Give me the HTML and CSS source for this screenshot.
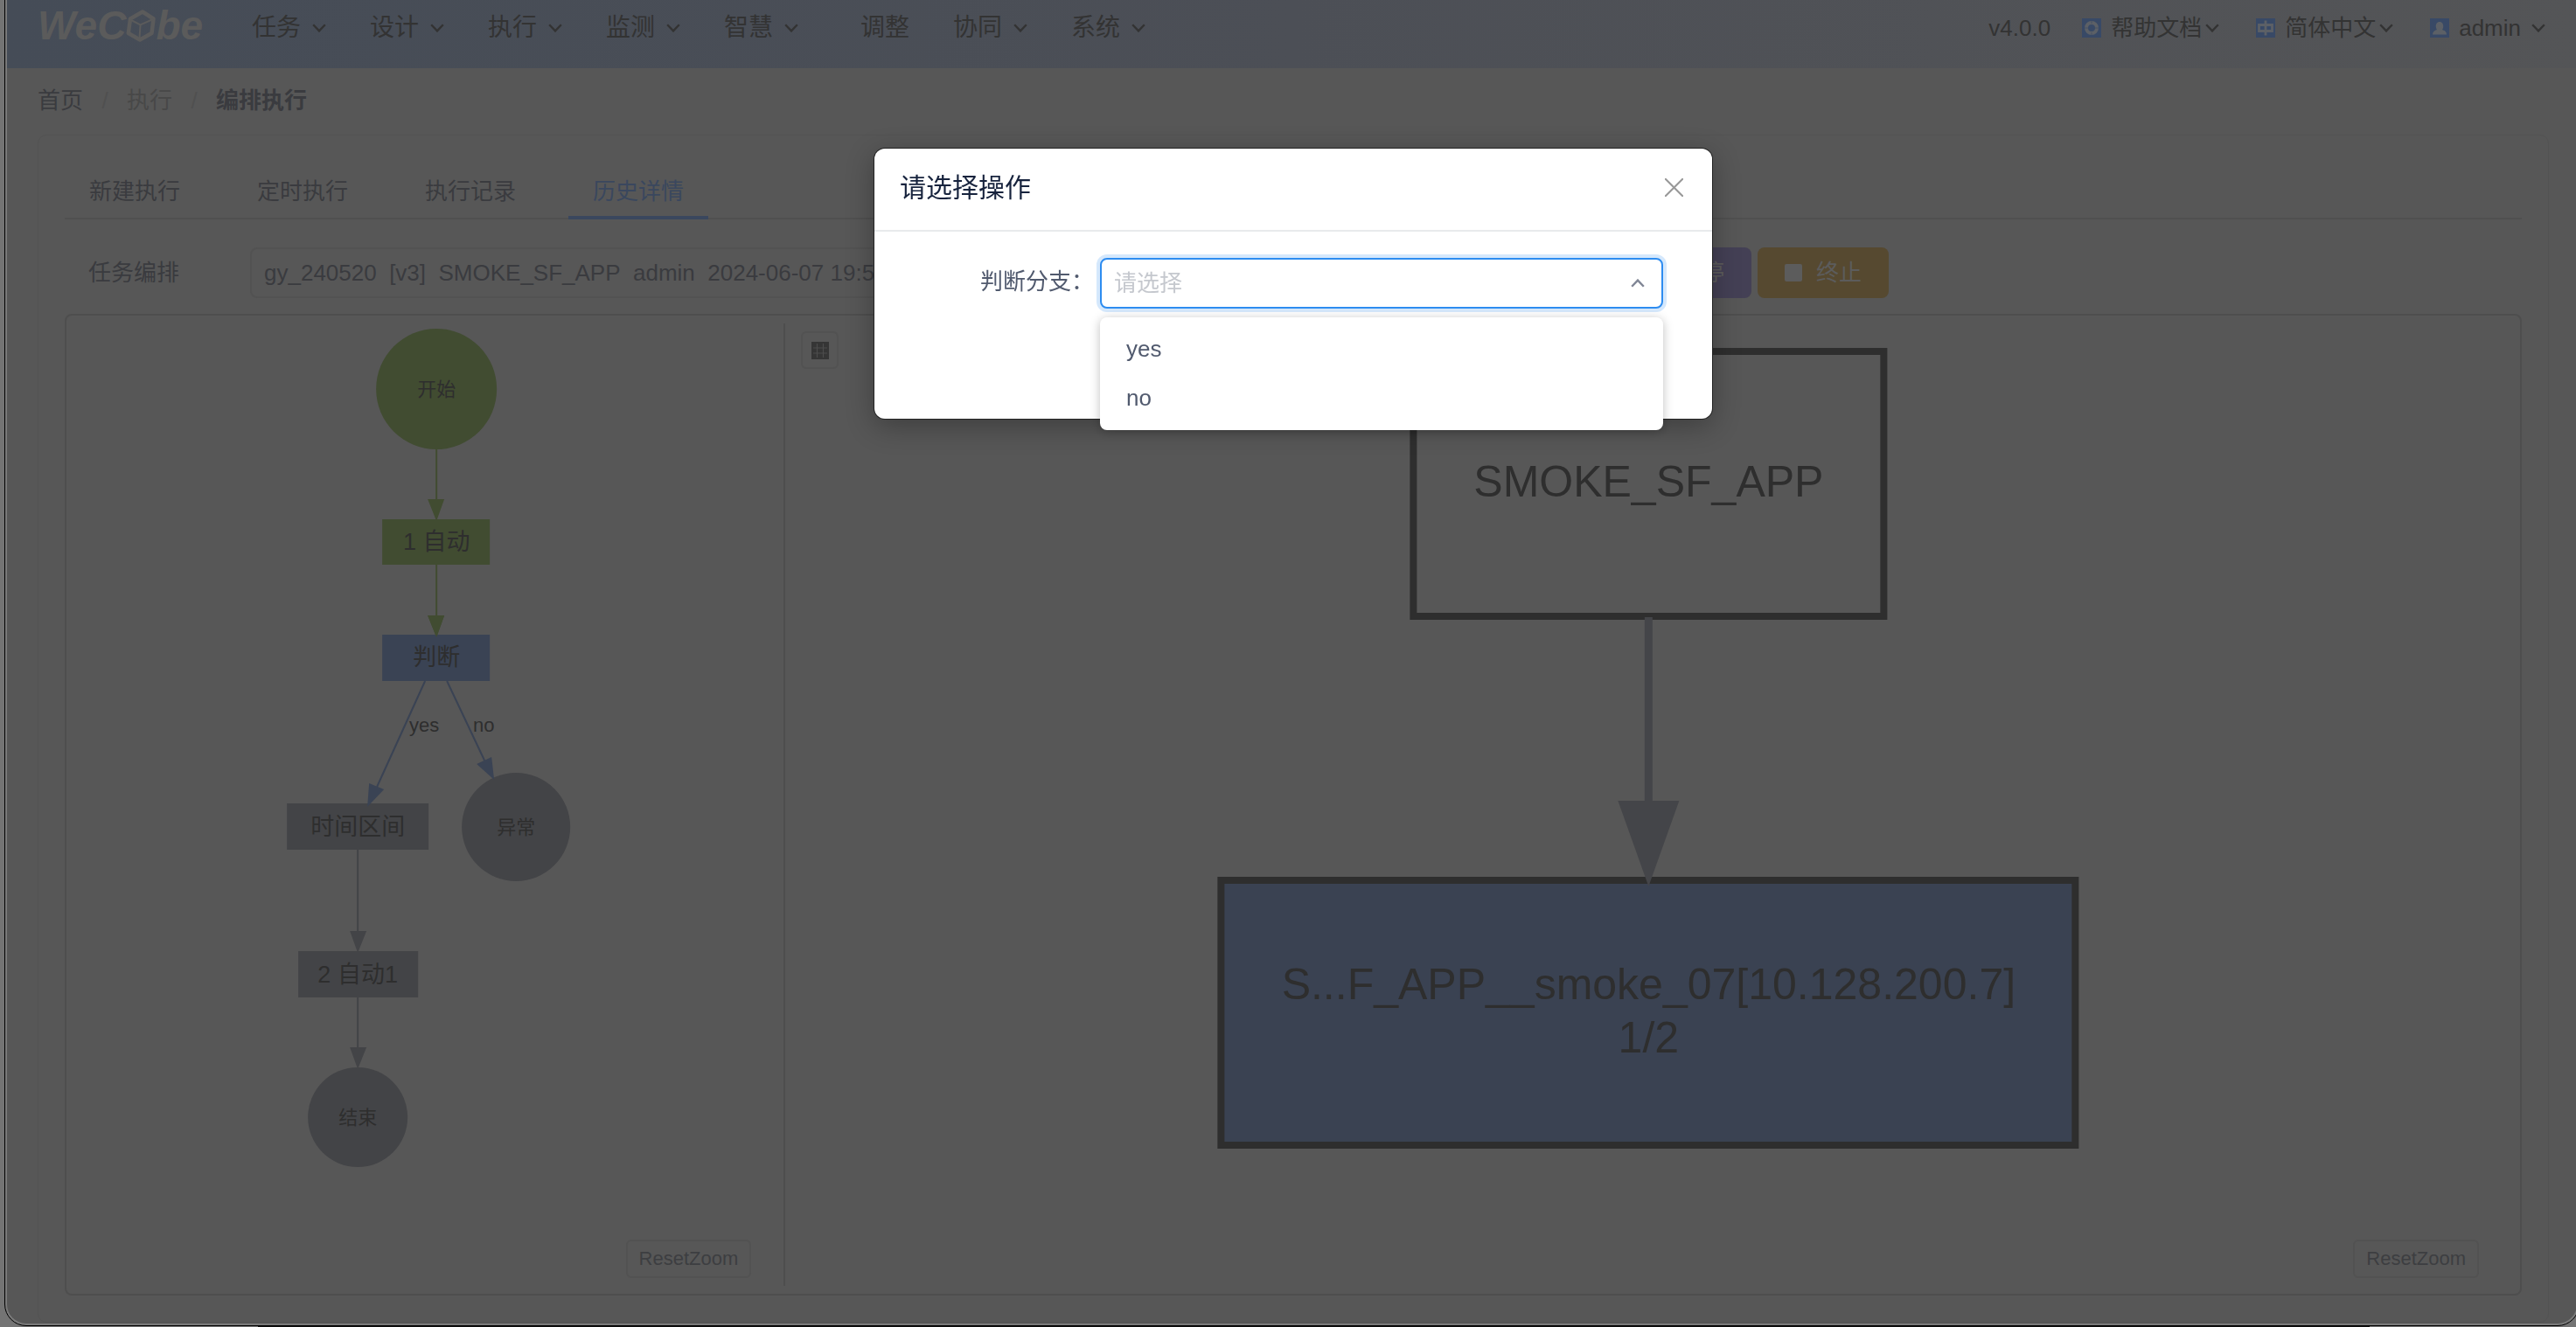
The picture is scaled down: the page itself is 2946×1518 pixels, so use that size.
FILE: index.html
```
<!DOCTYPE html>
<html lang="zh-CN">
<head>
<meta charset="utf-8">
<title>WeCube - 编排执行</title>
<link rel="stylesheet" href="styles.css">
</head>
<body>
<svg class="defs" aria-hidden="true">
  <symbol id="chev" viewBox="0 0 16 10"><path d="M1.2 1.2 8 8.4l6.800-7.200" fill="none" stroke="currentColor" stroke-width="2.400"/></symbol>
</svg>
<div class="desk">
<div class="window">
  <header class="topbar">
    <a class="logo" href="#" aria-label="WeCube"><span>WeC</span><svg class="cube" viewBox="0 0 34 37"><path d="M19 2.500 31.500 10.500 29.500 27 16 34.500 2.800 27 5 10.500Z" fill="none" stroke="currentColor" stroke-width="4.500" stroke-linejoin="round"/><path d="M6 12l10.500 5.500L31 11M16.500 17.500 15.500 33" fill="none" stroke="currentColor" stroke-width="2"/></svg><span>be</span></a>
    <nav class="menu">
      <a href="#">任务<svg><use href="#chev"/></svg></a>
      <a href="#">设计<svg><use href="#chev"/></svg></a>
      <a href="#">执行<svg><use href="#chev"/></svg></a>
      <a href="#">监测<svg><use href="#chev"/></svg></a>
      <a href="#">智慧<svg><use href="#chev"/></svg></a>
      <a class="plain" href="#">调整</a>
      <a href="#">协同<svg><use href="#chev"/></svg></a>
      <a href="#">系统<svg><use href="#chev"/></svg></a>
    </nav>
    <div class="tools">
      <span class="version">v4.0.0</span>
      <a href="#"><svg class="badge" viewBox="0 0 22 22"><rect width="22" height="22" fill="#384966"/><circle cx="11" cy="11" r="6" fill="none" stroke="#5c6066" stroke-width="4"/><path d="M3 11h4M15 11h4M11 3v3M11 16v3" stroke="#4c5665" stroke-width="1.500"/></svg>帮助文档<svg class="chev"><use href="#chev"/></svg></a>
      <a href="#"><svg class="badge" viewBox="0 0 22 22"><rect width="22" height="22" fill="#384966"/><path d="M3.500 7.500h15v7h-15zM11 2.500v17" fill="none" stroke="#5c6066" stroke-width="2.800"/></svg>简体中文<svg class="chev"><use href="#chev"/></svg></a>
      <a class="user" href="#"><svg class="badge" viewBox="0 0 22 22"><rect width="22" height="22" fill="#384966"/><path d="M3 18.500c0-3 2-4.500 5-5.500-2-2-2-9 3-9s5 7 3 9c3 1 5 2.500 5 5.500Z" fill="#5c6066"/></svg>admin<svg class="chev"><use href="#chev"/></svg></a>
    </div>
  </header>

  <nav class="crumbs">
    <a href="#">首页</a><i>/</i><a class="dim" href="#">执行</a><i>/</i><b>编排执行</b>
  </nav>

  <main class="card">
    <nav class="tabs">
      <a href="#">新建执行</a><a href="#">定时执行</a><a href="#">执行记录</a><a class="active" href="#">历史详情</a>
    </nav>
    <div class="filter">
      <label for="task">任务编排</label>
      <select id="task"><option>gy_240520&nbsp; [v3]&nbsp; SMOKE_SF_APP&nbsp; admin&nbsp; 2024-06-07 19:55:30</option></select>
      <button class="btn pause" type="button"><svg viewBox="0 0 20 20"><path d="M3 0h5v20H3zM12 0h5v20h-5z" fill="currentColor"/></svg>暂停</button>
      <button class="btn stop" type="button"><svg viewBox="0 0 20 20"><rect width="20" height="20" rx="2" fill="currentColor"/></svg>终止</button>
    </div>

    <section class="graphs">
      <div class="pane flow">
        <svg class="canvas" viewBox="77 361 820 1119">
          <g class="ok">
            <circle cx="500" cy="445" r="69"/>
            <path class="edge" d="M500 514v60M500 646v60"/>
            <path d="M490 571h19l-9 25ZM490 704h19l-9 25Z"/>
            <rect x="438" y="594" width="123" height="52"/>
          </g>
          <g class="run">
            <rect x="438" y="726" width="123" height="53"/>
            <path class="edge" d="M487 779 432 900M512 779l43 91"/>
          </g>
          <path class="ok" d="M490 704h19l-9 25Z"/>
          <g class="idle">
            <rect x="329" y="919" width="162" height="53"/>
            <circle cx="591" cy="946" r="62"/>
            <path class="edge" d="M410 972v96M410 1141v60"/>
            <path d="M401 1065h19l-10 25ZM401 1198h19l-10 25Z"/>
            <rect x="342" y="1088" width="137" height="53"/>
            <circle cx="410" cy="1278" r="57"/>
          </g>
          <path class="run" d="M423 896l17 7-19 20ZM546 874l17-8 3 26Z"/>
          <g class="small">
            <text x="500" y="453">开始</text>
            <text x="591" y="954">异常</text>
            <text x="410" y="1286">结束</text>
            <text x="486" y="837">yes</text>
            <text x="554" y="837">no</text>
          </g>
          <g class="node">
            <text x="500" y="629">1 自动</text>
            <text x="500" y="761">判断</text>
            <text x="410" y="955">时间区间</text>
            <text x="410" y="1124">2 自动1</text>
          </g>
        </svg>
        <button class="reset" type="button">ResetZoom</button>
      </div>
      <div class="pane objects">
        <svg class="canvas" viewBox="899 361 1983 1119">
          <g class="box">
            <rect x="1617" y="402" width="538" height="303" fill="none"/>
            <rect x="1397" y="1007" width="977" height="303" fill="#3a4252"/>
          </g>
          <path d="M1886 706v212" fill="none" stroke="#444549" stroke-width="9"/>
          <path d="M1851 916h70l-35 98Z" fill="#444549"/>
          <g class="big">
            <text x="1886" y="568">SMOKE_SF_APP</text>
            <text x="1886" y="1143">S...F_APP__smoke_07[10.128.200.7]</text>
            <text x="1886" y="1204">1/2</text>
          </g>
        </svg>
        <button class="grid-btn" type="button" aria-label="表格"><svg viewBox="0 0 20 20"><path d="M0 0h20v20H0z" fill="#353535"/><path d="M6.500 2v16M13.500 2v16M2 7h16M2 13h16" stroke="#4c4c4c" stroke-width="1.200"/></svg></button>
        <button class="reset" type="button">ResetZoom</button>
      </div>
    </section>
  </main>
</div>
</div>

<div class="modal-layer">
  <div class="modal" role="dialog" aria-labelledby="modal-title">
    <div class="modal-head">
      <h2 id="modal-title">请选择操作</h2>
      <button type="button" aria-label="关闭"><svg viewBox="0 0 20 20"><path d="M0 0l20 20M20 0 0 20" stroke="#999" stroke-width="2"/></svg></button>
    </div>
    <div class="modal-body">
      <label for="branch">判断分支：</label>
      <div class="picker">
        <select id="branch"><option>请选择</option></select>
        <svg class="caret"><use href="#chev"/></svg>
        <ul class="options" role="listbox">
          <li role="option">yes</li>
          <li role="option">no</li>
        </ul>
      </div>
    </div>
  </div>
</div>
</body>
</html>
```
FILE: styles.css
```
* { box-sizing: border-box; }
body {
  margin: 0;
  overflow-x: hidden;
  font: 26px/40px "Liberation Sans", "Noto Sans CJK SC", sans-serif;
  color: #3a3b3f;
  background: #747474;
}
a { color: inherit; text-decoration: none; }
button, select { font: inherit; margin: 0; cursor: pointer; }
.defs { position: absolute; width: 0; height: 0; }

.desk {
  min-height: 100vh;
  padding: 0 0 1px 5px;
  overflow: hidden;
  background: linear-gradient(90deg, #747474 10%, #101010 10%, #101010 92%, #747474 92%) bottom / 100% 1px no-repeat, #747474;
}
.window {
  margin-right: -3px;
  border: solid #7a7a7a;
  border-width: 0 2px 2px;
  border-radius: 0 0 24px 24px;
  outline: 1px solid #000;
  margin-left: 1px;
  background: #575757;
  padding-bottom: 1px;
}

/* Top bar */
.topbar {
  display: flex;
  align-items: center;
  height: 78px;
  padding: 0 36px 14px 35px;
  background: linear-gradient(90deg, #454c57, #4c4f56 50%, #545557);
  color: #333;
}
.logo {
  display: flex;
  align-items: center;
  width: 190px;
  height: 54px;
  margin-top: -6px;
  font: italic bold 46px/54px "Liberation Sans", sans-serif;
  color: #5b5b5b;
}
.cube { flex: none; width: 34px; height: 37px; }
.menu { display: flex; gap: 50px; margin-left: 55px; font-size: 28px; }
.menu a { display: flex; align-items: center; gap: 13px; white-space: nowrap; }
.menu svg, .chev { width: 16px; height: 10px; }
.menu .plain { margin-left: 21px; }
.tools { display: flex; gap: 42px; margin-left: auto; white-space: nowrap; }
.tools a { display: flex; align-items: center; }
.version { margin-right: -6px; }
.badge { width: 22px; height: 22px; margin-right: 11px; }
.chev { margin-left: 4px; }
.user .chev { margin-left: 12px; }

/* Breadcrumb */
.crumbs { display: flex; padding: 17px 35px 19px; }
.crumbs i { width: 50px; text-align: center; font-style: normal; color: #505050; }
.crumbs .dim { color: #484848; }

/* Page card */
.card {
  margin: 0 32px 0 35px;
  padding: 31px 30px 30px;
  border: 1px solid #535353;
  border-radius: 10px;
}
.tabs { display: flex; gap: 32px; box-shadow: inset 0 -2px #505050; }
.tabs a { padding: 13px 28px 8px; border-bottom: 4px solid transparent; }
.tabs .active { color: #3a475e; border-color: #3a475e; }

.filter { display: flex; align-items: center; margin: 32px 0 18px; height: 58px; }
.filter label { flex: none; width: 212px; padding-left: 27px; }
.filter select {
  flex: 0 1 1557px;
  min-width: 0;
  height: 58px;
  margin-right: 10px;
  padding: 0 14px;
  border: 2px solid #525252;
  border-radius: 8px;
  appearance: none;
  background: none;
  color: inherit;
}
.btn {
  display: flex;
  align-items: center;
  justify-content: center;
  gap: 16px;
  width: 150px;
  height: 58px;
  margin-right: 7px;
  padding: 0;
  border: 0;
  border-radius: 8px;
  color: #5c5c5c;
}
.btn svg { width: 20px; height: 20px; }
.pause { background: #444055; }
.stop { background: #564930; }

/* Graph panes */
.graphs {
  display: grid;
  grid-template-columns: 822fr 1983fr;
  border: 2px solid #4e4e4e;
  border-radius: 8px;
}
.pane { position: relative; }
.flow::after {
  content: "";
  position: absolute;
  inset: 9px 0 9px auto;
  width: 2px;
  background: #4e4e4e;
}
.canvas { display: block; width: 100%; height: 1119px; }
.flow .canvas { width: calc(100% - 2px); }
.ok { fill: #414c31; stroke: #414c31; }
.run { fill: #3a4354; stroke: #3a4354; }
.idle { fill: #434447; stroke: #434447; }
.ok, .run, .idle { stroke-width: 0; }
.edge { stroke-width: 2px; }
.box rect { stroke: #2e2e2e; stroke-width: 8px; }
.canvas text { fill: #2e2e2e; text-anchor: middle; }
.small text { font-size: 22px; }
.node text { font-size: 27px; }
.big text { font-size: 50px; }
.reset {
  position: absolute;
  right: 39px;
  bottom: 18px;
  height: 44px;
  padding: 0 13px;
  border: 2px solid #525252;
  border-radius: 6px;
  background: #575757;
  color: #3d3e41;
  font-size: 22px;
}
.objects .reset { right: 47px; }
.grid-btn {
  position: absolute;
  left: 18px;
  top: 18px;
  display: grid;
  place-items: center;
  width: 43px;
  height: 43px;
  padding: 0;
  border: 2px solid #525252;
  border-radius: 6px;
  background: none;
}
.grid-btn svg { width: 20px; height: 20px; }

/* Dialog */
.modal-layer {
  position: fixed;
  inset: 0;
  display: flex;
  justify-content: center;
  align-items: flex-start;
  padding: 170px 0 0 12px;
}
.modal {
  width: 958px;
  min-height: 309px;
  border-radius: 12px;
  background: #fff;
  box-shadow: 0 0 0 1px #222, 0 8px 32px rgba(0, 0, 0, .3);
}
.modal-head {
  display: flex;
  align-items: center;
  justify-content: space-between;
  height: 95px;
  padding: 0 33px 4px 29px;
  border-bottom: 2px solid #e8eaec;
}
.modal-head h2 { margin: 0; font-size: 30px; font-weight: 400; color: #17233d; }
.modal-head button { display: flex; padding: 0; border: 0; background: none; }
.modal-head svg { width: 21px; height: 21px; }
.modal-body {
  display: flex;
  padding: 30px 56px 0 121px;
  color: #515a6e;
}
.modal-body label { flex: none; width: 137px; padding-top: 7px; }
.picker { position: relative; flex: 1; }
.picker select {
  display: block;
  width: 100%;
  height: 58px;
  padding: 0 14px;
  border: 2px solid #2d8cf0;
  border-radius: 8px;
  appearance: none;
  outline: none;
  background: #fff;
  box-shadow: 0 0 0 4px rgba(45, 140, 240, .2);
  color: #c5c8ce;
}
.caret {
  position: absolute;
  right: 21px;
  top: 24px;
  width: 16px;
  height: 10px;
  color: #808695;
  rotate: 180deg;
}
.options {
  position: absolute;
  inset: 68px 0 auto;
  margin: 0;
  padding: 8px 0 9px;
  border-radius: 8px;
  background: #fff;
  box-shadow: 0 2px 12px rgba(0, 0, 0, .25);
  list-style: none;
}
.options li { padding: 8px 30px; }
```
